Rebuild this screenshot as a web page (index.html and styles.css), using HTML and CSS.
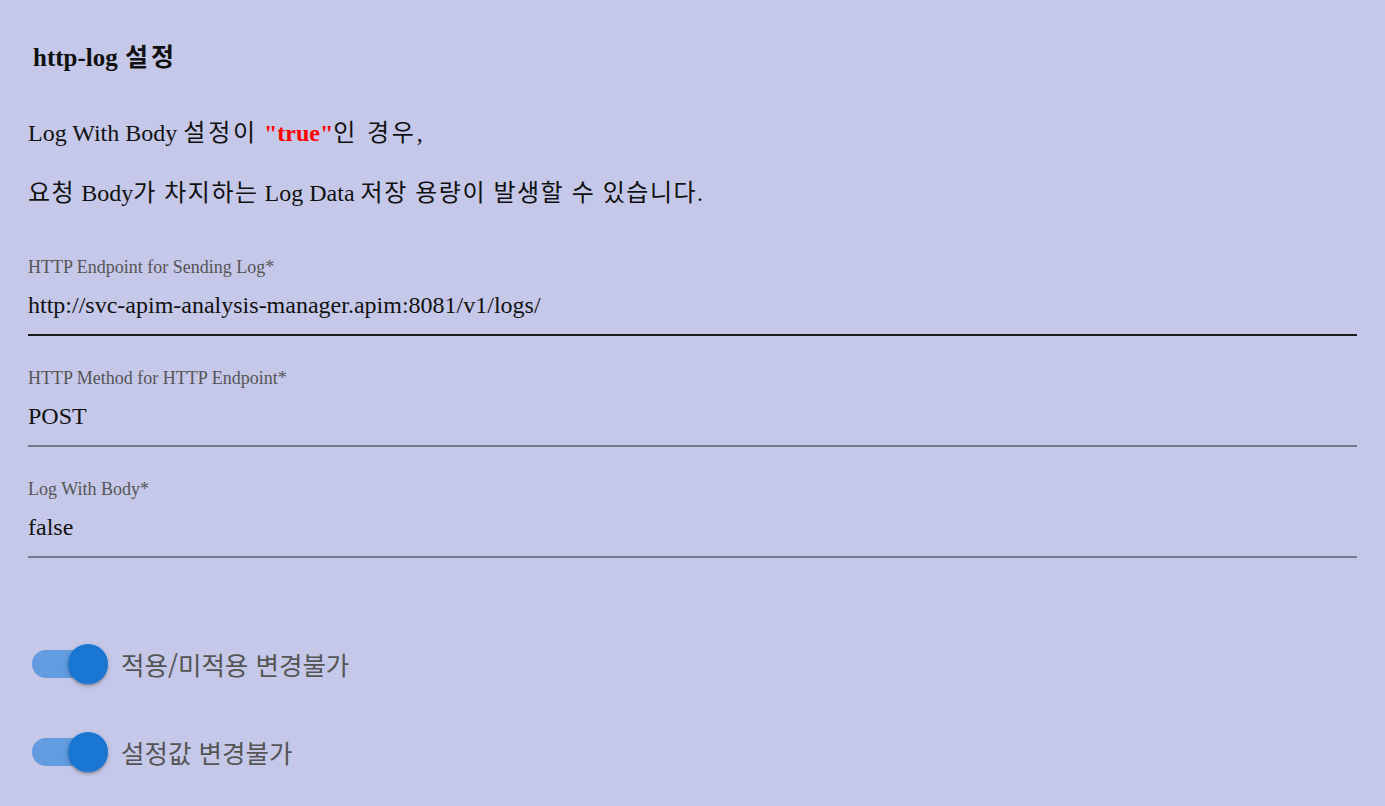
FILE: index.html
```html
<!DOCTYPE html>
<html lang="ko">
<head>
<meta charset="utf-8">
<title>http-log 설정</title>
<link rel="stylesheet" href="styles.css">
</head>
<body>
<div class="page">
  <h3 class="title">http-log <span class="ko">설정</span></h3>
  <p class="note note1">Log With Body <span class="ko">설정이</span> <b class="red">"true"</b><span class="ko">인 경우</span>,</p>
  <p class="note note2"><span class="ko">요청</span> Body<span class="ko">가 차지하는</span> Log Data <span class="ko">저장 용량이 발생할 수 있습니다</span>.</p>

  <div class="field field-first">
    <div class="label">HTTP Endpoint for Sending Log*</div>
    <div class="value">http://svc-apim-analysis-manager.apim:8081/v1/logs/</div>
    <div class="line line-dark"></div>
  </div>
  <div class="field">
    <div class="label">HTTP Method for HTTP Endpoint*</div>
    <div class="value">POST</div>
    <div class="line"></div>
  </div>
  <div class="field">
    <div class="label">Log With Body*</div>
    <div class="value">false</div>
    <div class="line"></div>
  </div>

  <div class="switch-row switch-first">
    <span class="switch"><span class="track"></span><span class="thumb"></span></span>
    <span class="switch-label">적용/미적용 변경불가</span>
  </div>
  <div class="switch-row">
    <span class="switch"><span class="track"></span><span class="thumb"></span></span>
    <span class="switch-label">설정값 변경불가</span>
  </div>
</div>
</body>
</html>
```
FILE: styles.css
```css
html, body {
  margin: 0;
  padding: 0;
  background: #c5c8e8;
}
body {
  font-family: "Liberation Serif", "Noto Sans CJK KR", serif;
  color: #111;
}
.page {
  padding: 43px 28px 0 28px;
  width: 1329px;
}
.title {
  margin: 0 0 0 5px;
  font-size: 25px;
  line-height: 30px;
  font-weight: bold;
  color: #111;
}
.title .ko {
  letter-spacing: 3px;
  margin-left: 1px;
}
.note {
  margin: 45px 0 0 0;
  font-size: 24px;
  line-height: 30px;
}
.note1 .ko {
  letter-spacing: 2.8px;
}
.note2 {
  margin-top: 30px;
}
.note2 .ko {
  letter-spacing: 1.5px;
}
.red {
  color: #ff0000;
}
.field {
  margin-top: 32px;
}
.field-first {
  margin-top: 49px;
}
.label {
  font-size: 18px;
  line-height: 20px;
  color: #555;
}
.value {
  margin-top: 13px;
  font-size: 24px;
  line-height: 30px;
  color: #111;
}
.line {
  margin-top: 14px;
  height: 2px;
  background: #777a8c;
}
.line-dark {
  background: #1a1a1f;
}
.switch-row {
  display: flex;
  align-items: center;
  height: 48px;
  margin-top: 40px;
}
.switch-first {
  margin-top: 82px;
}
.switch {
  position: relative;
  display: block;
  width: 80px;
  height: 48px;
  margin-left: 4px;
  flex: none;
}
.track {
  position: absolute;
  left: 0;
  top: 10px;
  width: 68px;
  height: 28px;
  border-radius: 14px;
  background: #629bdf;
}
.thumb {
  position: absolute;
  left: 36px;
  top: 4px;
  width: 40px;
  height: 40px;
  border-radius: 50%;
  background: #1976d2;
  box-shadow: 0 2px 2px -1px rgba(0,0,0,0.2), 0 2px 3px 0 rgba(0,0,0,0.14), 0 2px 6px 0 rgba(0,0,0,0.12);
}
.switch-label {
  margin-left: 9px;
  font-family: "Noto Sans CJK KR", "Noto Sans", sans-serif;
  font-size: 25.5px;
  color: #555;
  line-height: 32px;
}
```
